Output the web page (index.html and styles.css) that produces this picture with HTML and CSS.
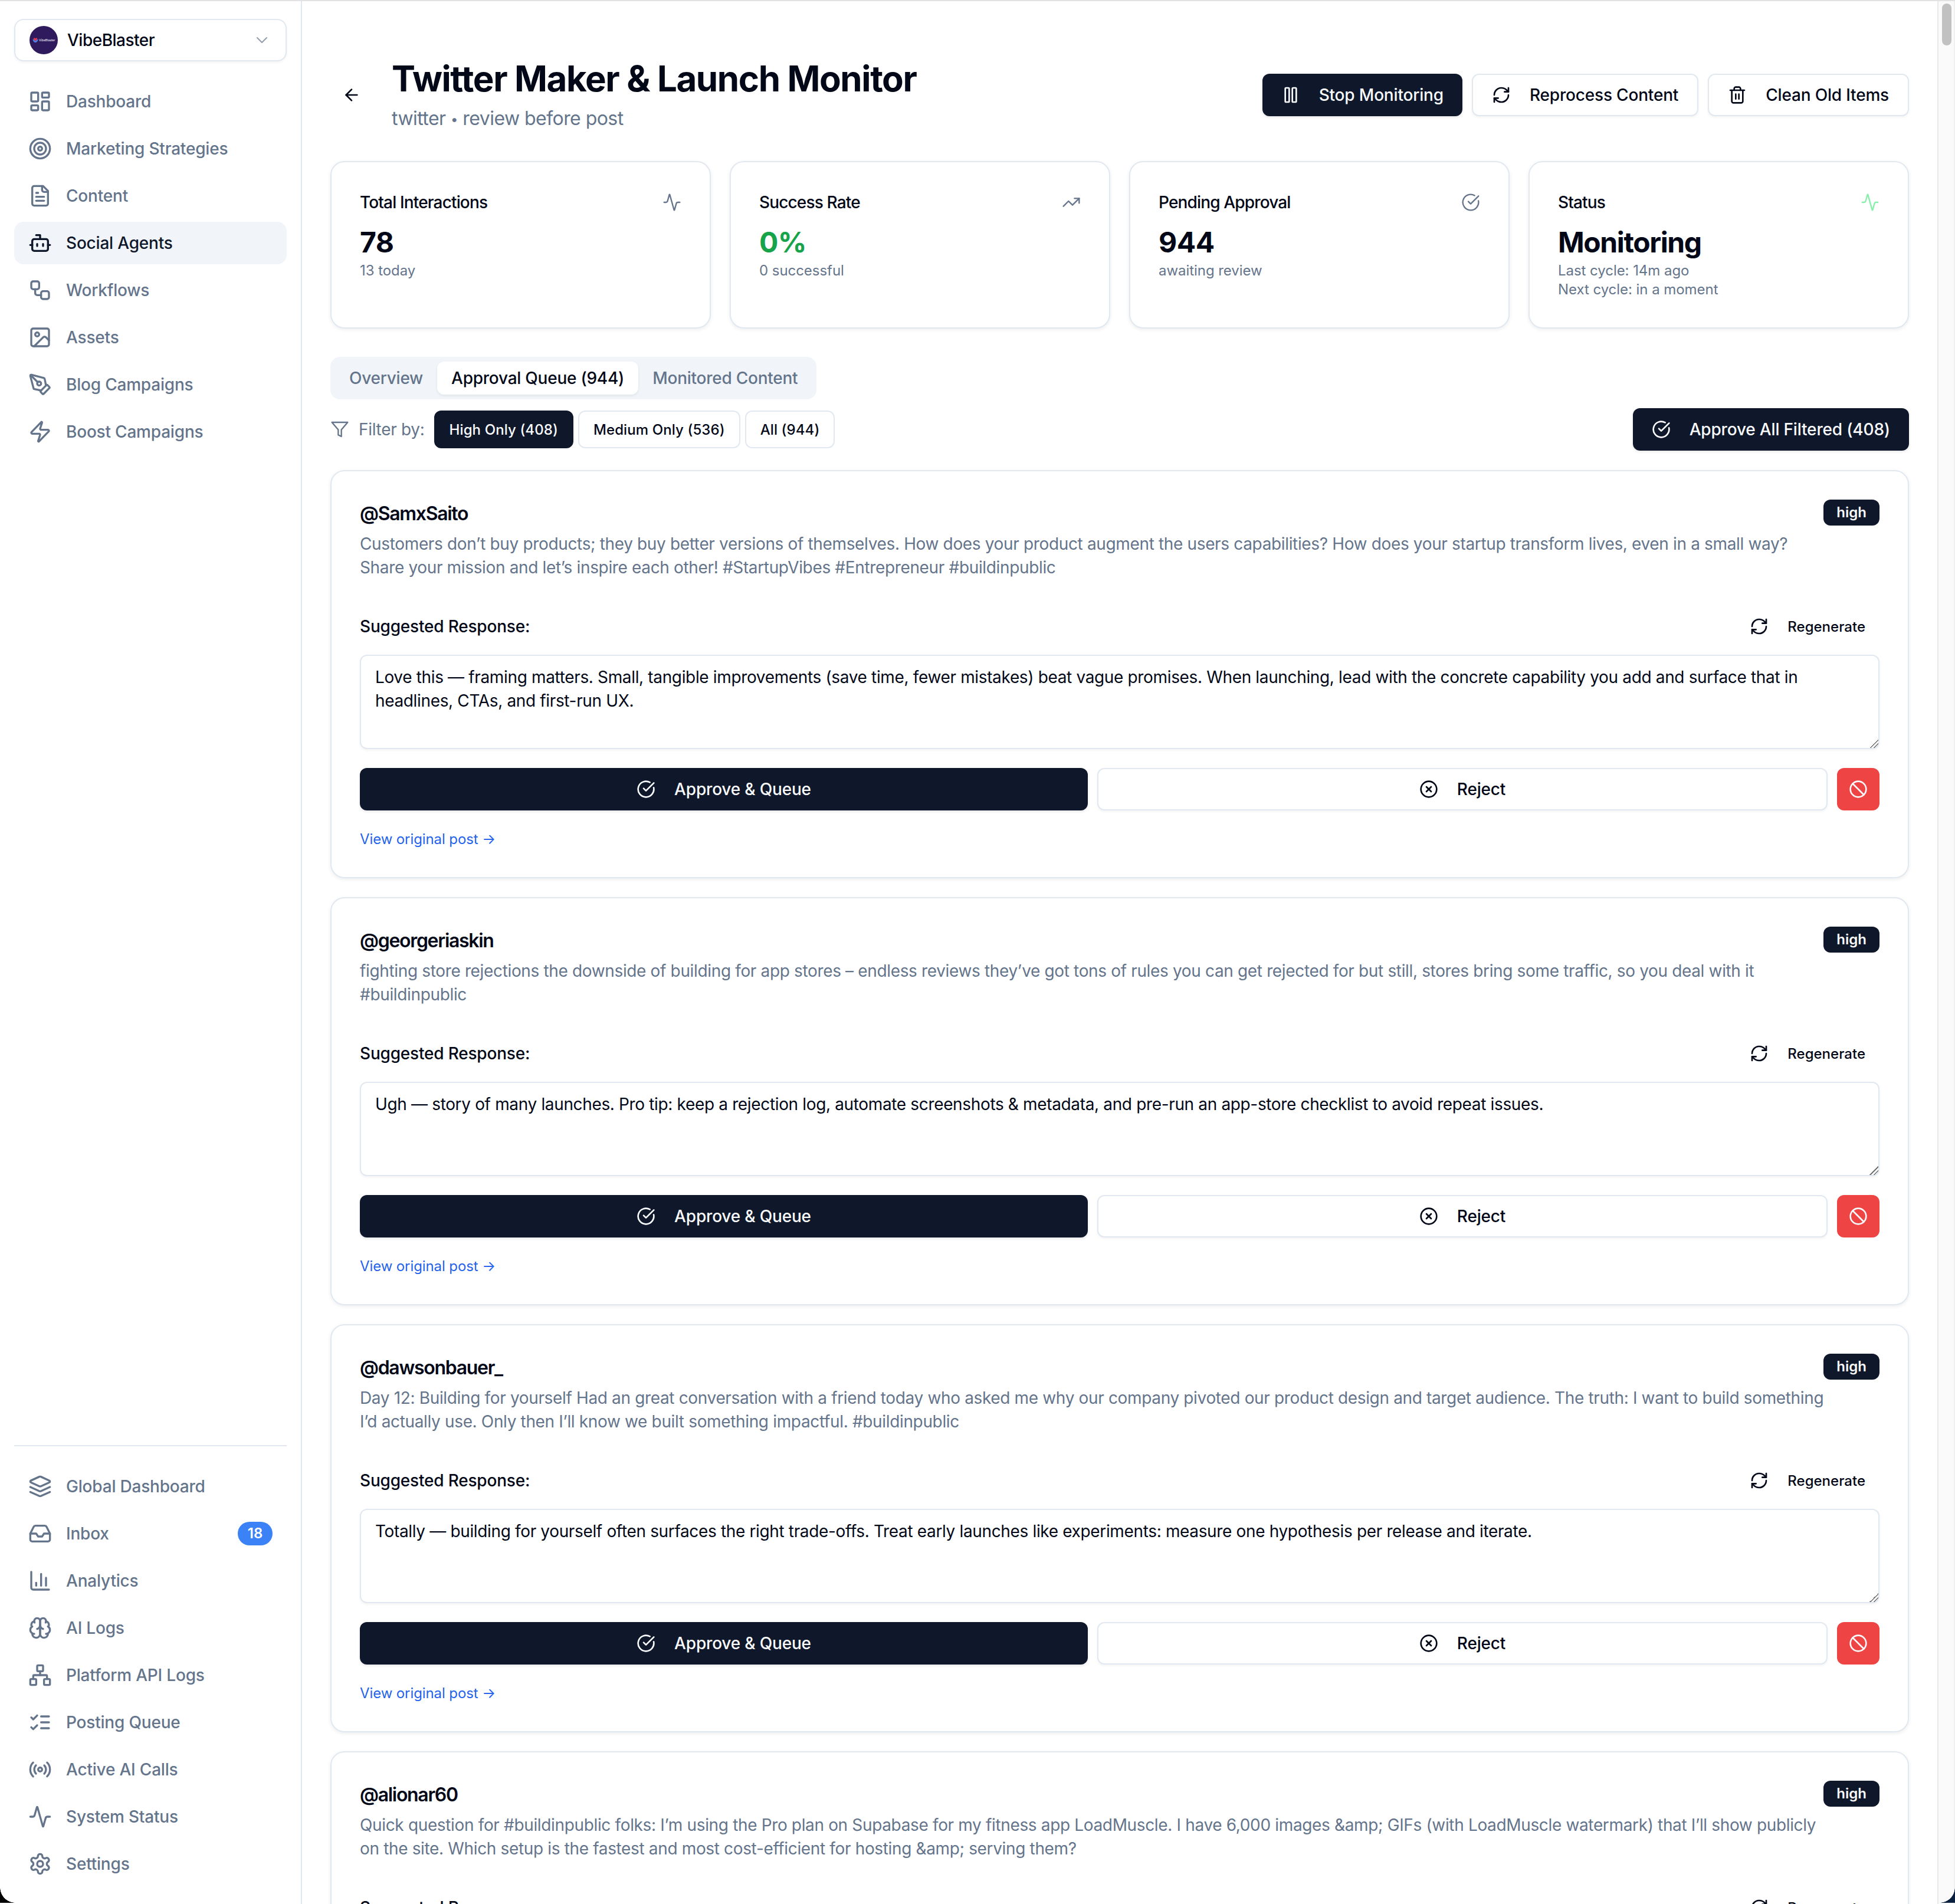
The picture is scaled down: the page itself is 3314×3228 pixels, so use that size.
FILE: index.html
```html
<!DOCTYPE html>
<html lang="en">
<head>
<meta charset="utf-8">
<title>Twitter Maker &amp; Launch Monitor</title>
<link rel="stylesheet" href="styles.css">
</head>
<body>
<svg class="defs" aria-hidden="true">
  <defs>
    <symbol id="i-dashboard" viewBox="0 0 24 24"><rect x="3" y="3" width="7" height="9" rx="1"/><rect x="14" y="3" width="7" height="5" rx="1"/><rect x="14" y="12" width="7" height="9" rx="1"/><rect x="3" y="16" width="7" height="5" rx="1"/></symbol>
    <symbol id="i-target" viewBox="0 0 24 24"><circle cx="12" cy="12" r="10"/><circle cx="12" cy="12" r="6"/><circle cx="12" cy="12" r="2"/></symbol>
    <symbol id="i-file" viewBox="0 0 24 24"><path d="M15 2H6a2 2 0 0 0-2 2v16a2 2 0 0 0 2 2h12a2 2 0 0 0 2-2V7Z"/><path d="M14 2v4a2 2 0 0 0 2 2h4"/><path d="M10 9H8"/><path d="M16 13H8"/><path d="M16 17H8"/></symbol>
    <symbol id="i-bot" viewBox="0 0 24 24"><path d="M12 8V4H8"/><rect x="4" y="8" width="16" height="12" rx="2"/><path d="M2 14h2"/><path d="M20 14h2"/><path d="M15 13v2"/><path d="M9 13v2"/></symbol>
    <symbol id="i-workflow" viewBox="0 0 24 24"><rect x="3" y="3" width="8" height="8" rx="2"/><path d="M7 11v4a2 2 0 0 0 2 2h4"/><rect x="13" y="13" width="8" height="8" rx="2"/></symbol>
    <symbol id="i-image" viewBox="0 0 24 24"><rect x="3" y="3" width="18" height="18" rx="2"/><circle cx="9" cy="9" r="2"/><path d="m21 15-3.086-3.086a2 2 0 0 0-2.828 0L6 21"/></symbol>
    <symbol id="i-pen" viewBox="0 0 24 24"><path d="M15.707 21.293a1 1 0 0 1-1.414 0l-1.586-1.586a1 1 0 0 1 0-1.414l5.586-5.586a1 1 0 0 1 1.414 0l1.586 1.586a1 1 0 0 1 0 1.414z"/><path d="m18 13-1.375-6.874a1 1 0 0 0-.746-.776L3.235 2.028a1 1 0 0 0-1.207 1.207L5.35 15.879a1 1 0 0 0 .776.746L13 18"/><path d="m2.3 2.3 7.286 7.286"/><circle cx="11" cy="11" r="2"/></symbol>
    <symbol id="i-zap" viewBox="0 0 24 24"><path d="M4 14a1 1 0 0 1-.78-1.63l9.9-10.2a.5.5 0 0 1 .86.46l-1.92 6.02A1 1 0 0 0 13 10h7a1 1 0 0 1 .78 1.63l-9.9 10.2a.5.5 0 0 1-.86-.46l1.92-6.02A1 1 0 0 0 11 14z"/></symbol>
    <symbol id="i-layers" viewBox="0 0 24 24"><path d="m12.83 2.18a2 2 0 0 0-1.66 0L2.6 6.08a1 1 0 0 0 0 1.83l8.58 3.91a2 2 0 0 0 1.66 0l8.58-3.9a1 1 0 0 0 0-1.83Z"/><path d="m22 17.65-9.17 4.16a2 2 0 0 1-1.66 0L2 17.65"/><path d="m22 12.65-9.17 4.16a2 2 0 0 1-1.66 0L2 12.65"/></symbol>
    <symbol id="i-inbox" viewBox="0 0 24 24"><polyline points="22 12 16 12 14 15 10 15 8 12 2 12"/><path d="M5.45 5.11 2 12v6a2 2 0 0 0 2 2h16a2 2 0 0 0 2-2v-6l-3.45-6.89A2 2 0 0 0 16.76 4H7.24a2 2 0 0 0-1.79 1.11z"/></symbol>
    <symbol id="i-chart" viewBox="0 0 24 24"><path d="M3 3v16a2 2 0 0 0 2 2h16"/><path d="M18 17V9"/><path d="M13 17V5"/><path d="M8 17v-3"/></symbol>
    <symbol id="i-brain" viewBox="0 0 24 24"><path d="M12 5a3 3 0 1 0-5.997.125 4 4 0 0 0-2.526 5.77 4 4 0 0 0 .556 6.588A4 4 0 1 0 12 18Z"/><path d="M12 5a3 3 0 1 1 5.997.125 4 4 0 0 1 2.526 5.77 4 4 0 0 1-.556 6.588A4 4 0 1 1 12 18Z"/><path d="M15 13a4.5 4.5 0 0 1-3-4 4.5 4.5 0 0 1-3 4"/><path d="M17.599 6.5a3 3 0 0 0 .399-1.375"/><path d="M6.003 5.125A3 3 0 0 0 6.401 6.5"/><path d="M3.477 10.896a4 4 0 0 1 .585-.396"/><path d="M19.938 10.5a4 4 0 0 1 .585.396"/><path d="M6 18a4 4 0 0 1-1.967-.516"/><path d="M19.967 17.484A4 4 0 0 1 18 18"/></symbol>
    <symbol id="i-network" viewBox="0 0 24 24"><rect x="16" y="16" width="6" height="6" rx="1"/><rect x="2" y="16" width="6" height="6" rx="1"/><rect x="9" y="2" width="6" height="6" rx="1"/><path d="M5 16v-3a1 1 0 0 1 1-1h12a1 1 0 0 1 1 1v3"/><path d="M12 12V8"/></symbol>
    <symbol id="i-list" viewBox="0 0 24 24"><path d="m3 17 2 2 4-4"/><path d="m3 7 2 2 4-4"/><path d="M13 6h8"/><path d="M13 12h8"/><path d="M13 18h8"/></symbol>
    <symbol id="i-radio" viewBox="0 0 24 24"><path d="M4.9 19.1C1 15.2 1 8.8 4.9 4.9"/><path d="M7.8 16.2c-2.3-2.3-2.3-6.1 0-8.5"/><circle cx="12" cy="12" r="2"/><path d="M16.2 7.8c2.3 2.3 2.3 6.1 0 8.5"/><path d="M19.1 4.9C23 8.8 23 15.1 19.1 19"/></symbol>
    <symbol id="i-activity" viewBox="0 0 24 24"><path d="M22 12h-2.48a2 2 0 0 0-1.93 1.46l-2.35 8.36a.25.25 0 0 1-.48 0L9.24 2.18a.25.25 0 0 0-.48 0l-2.35 8.36A2 2 0 0 1 4.49 12H2"/></symbol>
    <symbol id="i-settings" viewBox="0 0 24 24"><path d="M12.22 2h-.44a2 2 0 0 0-2 2v.18a2 2 0 0 1-1 1.73l-.43.25a2 2 0 0 1-2 0l-.15-.08a2 2 0 0 0-2.73.73l-.22.38a2 2 0 0 0 .73 2.73l.15.1a2 2 0 0 1 1 1.72v.51a2 2 0 0 1-1 1.74l-.15.09a2 2 0 0 0-.73 2.73l.22.38a2 2 0 0 0 2.73.73l.15-.08a2 2 0 0 1 2 0l.43.25a2 2 0 0 1 1 1.73V20a2 2 0 0 0 2 2h.44a2 2 0 0 0 2-2v-.18a2 2 0 0 1 1-1.73l.43-.25a2 2 0 0 1 2 0l.15.08a2 2 0 0 0 2.73-.73l.22-.39a2 2 0 0 0-.73-2.73l-.15-.08a2 2 0 0 1-1-1.74v-.5a2 2 0 0 1 1-1.74l.15-.09a2 2 0 0 0 .73-2.73l-.22-.38a2 2 0 0 0-2.73-.73l-.15.08a2 2 0 0 1-2 0l-.43-.25a2 2 0 0 1-1-1.73V4a2 2 0 0 0-2-2z"/><circle cx="12" cy="12" r="3"/></symbol>
    <symbol id="i-chevron" viewBox="0 0 24 24"><path d="m6 9 6 6 6-6"/></symbol>
    <symbol id="i-back" viewBox="0 0 24 24"><path d="m12 19-7-7 7-7"/><path d="M19 12H5"/></symbol>
    <symbol id="i-pause" viewBox="0 0 24 24"><rect x="14" y="3" width="5" height="18" rx="1"/><rect x="5" y="3" width="5" height="18" rx="1"/></symbol>
    <symbol id="i-refresh" viewBox="0 0 24 24"><path d="M3 12a9 9 0 0 1 9-9 9.75 9.75 0 0 1 6.74 2.74L21 8"/><path d="M21 3v5h-5"/><path d="M21 12a9 9 0 0 1-9 9 9.75 9.75 0 0 1-6.74-2.74L3 16"/><path d="M8 16H3v5"/></symbol>
    <symbol id="i-trash" viewBox="0 0 24 24"><path d="M3 6h18"/><path d="M19 6v14c0 1-1 2-2 2H7c-1 0-2-1-2-2V6"/><path d="M8 6V4c0-1 1-2 2-2h4c1 0 2 1 2 2v2"/><path d="M10 11v6"/><path d="M14 11v6"/></symbol>
    <symbol id="i-trend" viewBox="0 0 24 24"><polyline points="22 7 13.5 15.5 8.5 10.5 2 17"/><polyline points="16 7 22 7 22 13"/></symbol>
    <symbol id="i-check" viewBox="0 0 24 24"><path d="M21.801 10A10 10 0 1 1 17 3.335"/><path d="m9 11 3 3L22 4"/></symbol>
    <symbol id="i-filter" viewBox="0 0 24 24"><polygon points="22 3 2 3 10 12.46 10 19 14 21 14 12.46 22 3"/></symbol>
    <symbol id="i-x" viewBox="0 0 24 24"><circle cx="12" cy="12" r="10"/><path d="m15 9-6 6"/><path d="m9 9 6 6"/></symbol>
    <symbol id="i-ban" viewBox="0 0 24 24"><circle cx="12" cy="12" r="10"/><path d="m4.9 4.9 14.2 14.2"/></symbol>
  </defs>
</svg>

<div class="app">
  <aside class="sidebar">
    <button class="switcher">
      <span class="avatar">
        <svg class="avatar-mark" viewBox="0 0 20 20"><path class="mark-blue" d="M1 7c0 7 5 11 9 11s9-4 9-11l-4 1-5 5-5-5z"/><path class="mark-red" d="M10 13 4 6.500C3 4 5 2 7 2.500l3 2 3-2c2-.5 4 1.500 3 4z"/></svg>
        <span class="avatar-name">VibeBlaster</span>
      </span>
      <span class="switcher-name">VibeBlaster</span>
      <svg class="ico ico-32 switcher-chevron"><use href="#i-chevron"/></svg>
    </button>

    <nav class="nav">
      <a class="nav-item"><svg class="ico ico-40"><use href="#i-dashboard"/></svg>Dashboard</a>
      <a class="nav-item"><svg class="ico ico-40"><use href="#i-target"/></svg>Marketing Strategies</a>
      <a class="nav-item"><svg class="ico ico-40"><use href="#i-file"/></svg>Content</a>
      <a class="nav-item is-active"><svg class="ico ico-40"><use href="#i-bot"/></svg>Social Agents</a>
      <a class="nav-item"><svg class="ico ico-40"><use href="#i-workflow"/></svg>Workflows</a>
      <a class="nav-item"><svg class="ico ico-40"><use href="#i-image"/></svg>Assets</a>
      <a class="nav-item"><svg class="ico ico-40"><use href="#i-pen"/></svg>Blog Campaigns</a>
      <a class="nav-item"><svg class="ico ico-40"><use href="#i-zap"/></svg>Boost Campaigns</a>
    </nav>

    <nav class="nav nav-bottom">
      <a class="nav-item"><svg class="ico ico-40"><use href="#i-layers"/></svg>Global Dashboard</a>
      <a class="nav-item"><svg class="ico ico-40"><use href="#i-inbox"/></svg>Inbox<span class="count">18</span></a>
      <a class="nav-item"><svg class="ico ico-40"><use href="#i-chart"/></svg>Analytics</a>
      <a class="nav-item"><svg class="ico ico-40"><use href="#i-brain"/></svg>AI Logs</a>
      <a class="nav-item"><svg class="ico ico-40"><use href="#i-network"/></svg>Platform API Logs</a>
      <a class="nav-item"><svg class="ico ico-40"><use href="#i-list"/></svg>Posting Queue</a>
      <a class="nav-item"><svg class="ico ico-40"><use href="#i-radio"/></svg>Active AI Calls</a>
      <a class="nav-item"><svg class="ico ico-40"><use href="#i-activity"/></svg>System Status</a>
      <a class="nav-item"><svg class="ico ico-40"><use href="#i-settings"/></svg>Settings</a>
    </nav>
  </aside>

  <main class="main">
    <header class="page-head">
      <button class="back"><svg class="ico ico-32"><use href="#i-back"/></svg></button>
      <div class="page-titles">
        <h1 class="page-title">Twitter Maker &amp; Launch Monitor</h1>
        <p class="page-sub">twitter <span class="page-dot">•</span> review before post</p>
      </div>
      <div class="page-actions">
        <button class="btn btn-dark"><svg class="ico ico-32"><use href="#i-pause"/></svg>Stop Monitoring</button>
        <button class="btn btn-line"><svg class="ico ico-32"><use href="#i-refresh"/></svg>Reprocess Content</button>
        <button class="btn btn-line"><svg class="ico ico-32"><use href="#i-trash"/></svg>Clean Old Items</button>
      </div>
    </header>

    <section class="stats">
      <div class="stat">
        <div class="stat-top"><span>Total Interactions</span><svg class="ico ico-32 ico-thin stat-icon"><use href="#i-activity"/></svg></div>
        <div class="stat-value">78</div>
        <div class="stat-note">13 today</div>
      </div>
      <div class="stat">
        <div class="stat-top"><span>Success Rate</span><svg class="ico ico-32 ico-thin stat-icon"><use href="#i-trend"/></svg></div>
        <div class="stat-value stat-good">0%</div>
        <div class="stat-note">0 successful</div>
      </div>
      <div class="stat">
        <div class="stat-top"><span>Pending Approval</span><svg class="ico ico-32 ico-thin stat-icon"><use href="#i-check"/></svg></div>
        <div class="stat-value">944</div>
        <div class="stat-note">awaiting review</div>
      </div>
      <div class="stat">
        <div class="stat-top"><span>Status</span><svg class="ico ico-32 ico-thin stat-icon stat-icon-live"><use href="#i-activity"/></svg></div>
        <div class="stat-value stat-word">Monitoring</div>
        <div class="stat-note">Last cycle: 14m ago</div>
        <div class="stat-note">Next cycle: in a moment</div>
      </div>
    </section>

    <div class="tabs">
      <button class="tab">Overview</button>
      <button class="tab is-active">Approval Queue (944)</button>
      <button class="tab">Monitored Content</button>
    </div>

    <div class="filters">
      <svg class="ico ico-32 ico-thin filter-icon"><use href="#i-filter"/></svg>
      <span class="filter-label">Filter by:</span>
      <button class="pill pill-on">High Only (408)</button>
      <button class="pill">Medium Only (536)</button>
      <button class="pill">All (944)</button>
      <button class="btn btn-dark filters-approve"><svg class="ico ico-32"><use href="#i-check"/></svg>Approve All Filtered (408)</button>
    </div>

    <section class="posts">
      <article class="post">
        <div class="post-head">
          <div class="post-main">
            <div class="handle">@SamxSaito</div>
            <p class="post-text">Customers don’t buy products; they buy better versions of themselves. How does your product augment the users capabilities? How does your startup transform lives, even in a small way? Share your mission and let’s inspire each other! #StartupVibes #Entrepreneur #buildinpublic</p>
          </div>
          <span class="badge">high</span>
        </div>
        <div class="reply-head"><span class="reply-label">Suggested Response:</span><button class="regen"><svg class="ico ico-32"><use href="#i-refresh"/></svg>Regenerate</button></div>
        <textarea class="reply" readonly>Love this — framing matters. Small, tangible improvements (save time, fewer mistakes) beat vague promises. When launching, lead with the concrete capability you add and surface that in headlines, CTAs, and first-run UX.</textarea>
        <div class="post-actions">
          <button class="btn btn-dark btn-grow"><svg class="ico ico-32"><use href="#i-check"/></svg>Approve &amp; Queue</button>
          <button class="btn btn-line btn-grow"><svg class="ico ico-32"><use href="#i-x"/></svg>Reject</button>
          <button class="btn-block"><svg class="ico ico-32"><use href="#i-ban"/></svg></button>
        </div>
        <a class="post-link">View original post →</a>
      </article>

      <article class="post">
        <div class="post-head">
          <div class="post-main">
            <div class="handle">@georgeriaskin</div>
            <p class="post-text">fighting store rejections the downside of building for app stores – endless reviews they’ve got tons of rules you can get rejected for but still, stores bring some traffic, so you deal with it #buildinpublic</p>
          </div>
          <span class="badge">high</span>
        </div>
        <div class="reply-head"><span class="reply-label">Suggested Response:</span><button class="regen"><svg class="ico ico-32"><use href="#i-refresh"/></svg>Regenerate</button></div>
        <textarea class="reply" readonly>Ugh — story of many launches. Pro tip: keep a rejection log, automate screenshots &amp; metadata, and pre-run an app-store checklist to avoid repeat issues.</textarea>
        <div class="post-actions">
          <button class="btn btn-dark btn-grow"><svg class="ico ico-32"><use href="#i-check"/></svg>Approve &amp; Queue</button>
          <button class="btn btn-line btn-grow"><svg class="ico ico-32"><use href="#i-x"/></svg>Reject</button>
          <button class="btn-block"><svg class="ico ico-32"><use href="#i-ban"/></svg></button>
        </div>
        <a class="post-link">View original post →</a>
      </article>

      <article class="post">
        <div class="post-head">
          <div class="post-main">
            <div class="handle">@dawsonbauer_</div>
            <p class="post-text">Day 12: Building for yourself Had an great conversation with a friend today who asked me why our company pivoted our product design and target audience. The truth: I want to build something I’d actually use. Only then I’ll know we built something impactful. #buildinpublic</p>
          </div>
          <span class="badge">high</span>
        </div>
        <div class="reply-head"><span class="reply-label">Suggested Response:</span><button class="regen"><svg class="ico ico-32"><use href="#i-refresh"/></svg>Regenerate</button></div>
        <textarea class="reply" readonly>Totally — building for yourself often surfaces the right trade-offs. Treat early launches like experiments: measure one hypothesis per release and iterate.</textarea>
        <div class="post-actions">
          <button class="btn btn-dark btn-grow"><svg class="ico ico-32"><use href="#i-check"/></svg>Approve &amp; Queue</button>
          <button class="btn btn-line btn-grow"><svg class="ico ico-32"><use href="#i-x"/></svg>Reject</button>
          <button class="btn-block"><svg class="ico ico-32"><use href="#i-ban"/></svg></button>
        </div>
        <a class="post-link">View original post →</a>
      </article>

      <article class="post">
        <div class="post-head">
          <div class="post-main">
            <div class="handle">@alionar60</div>
            <p class="post-text">Quick question for #buildinpublic folks: I’m using the Pro plan on Supabase for my fitness app LoadMuscle. I have 6,000 images &amp;amp; GIFs (with LoadMuscle watermark) that I’ll show publicly on the site. Which setup is the fastest and most cost-efficient for hosting &amp;amp; serving them?</p>
          </div>
          <span class="badge">high</span>
        </div>
        <div class="reply-head"><span class="reply-label">Suggested Response:</span><button class="regen"><svg class="ico ico-32"><use href="#i-refresh"/></svg>Regenerate</button></div>
      </article>
    </section>
  </main>

  <div class="gutter"><div class="thumb"></div></div>
  <div class="corner corner-left"></div>
  <div class="corner corner-right"></div>
</div>
</body>
</html>
```

FILE: styles.css
```css
* { box-sizing: border-box; }

html, body {
  margin: 0;
  height: 3228px;
  overflow: hidden;
  background: #fff;
}

body {
  font-family: Inter, "Liberation Sans", sans-serif;
  font-size: 28px;
  color: #020817;
}

button, textarea { font-family: inherit; }
button { cursor: pointer; }

.defs { position: absolute; width: 0; height: 0; }

.ico {
  flex: none;
  fill: none;
  stroke: currentColor;
  stroke-width: 2;
  stroke-linecap: round;
  stroke-linejoin: round;
}
.ico-thin { stroke-width: 1.75; }
.ico-32 { width: 32px; height: 32px; }
.ico-40 { width: 40px; height: 40px; }

.app {
  position: relative;
  display: flex;
  height: 3228px;
  border-top: 2px solid #e2e2e4;
  overflow: hidden;
}

/* Sidebar */
.sidebar {
  flex: none;
  width: 512px;
  display: flex;
  flex-direction: column;
  padding: 30px 24px 32px;
  border-right: 2px solid #e2e8f0;
}

.switcher {
  display: flex;
  align-items: center;
  gap: 16px;
  width: 100%;
  height: 72px;
  padding: 0 24px;
  background: #fff;
  border: 2px solid #e2e8f0;
  border-radius: 16px;
  box-shadow: 0 2px 4px rgba(15, 23, 42, .05);
  color: #020817;
  font-size: 28px;
  font-weight: 500;
  letter-spacing: -.5px;
}
.switcher-name { flex: 1; text-align: left; }
.switcher-chevron { color: #64748b; opacity: .7; stroke-width: 1.5; }

.avatar {
  flex: none;
  display: flex;
  align-items: center;
  gap: 1px;
  width: 48px;
  height: 48px;
  padding-left: 5px;
  border-radius: 50%;
  background: #2e1a5c;
  overflow: hidden;
}
.avatar-mark { flex: none; width: 10px; height: 10px; }
.avatar-name { color: #e6e2f2; font-size: 5px; font-weight: 500; letter-spacing: 0; line-height: 1; white-space: nowrap; }
.mark-blue { fill: #4f7fe0; }
.mark-red { fill: #e8384f; }

.nav { display: flex; flex-direction: column; gap: 8px; }
.sidebar > .nav:first-of-type { margin-top: 32px; }

.nav-bottom {
  margin-top: auto;
  padding-top: 32px;
  border-top: 2px solid #e2e8f0;
}

.nav-item {
  display: flex;
  align-items: center;
  gap: 24px;
  height: 72px;
  padding: 0 24px;
  border-radius: 16px;
  color: #64748b;
  font-weight: 500;
  letter-spacing: -.2px;
  white-space: nowrap;
}
.nav-item.is-active { background: #f1f5f9; color: #0f172a; }

.count {
  margin-left: auto;
  min-width: 59px;
  height: 40px;
  padding: 0 16px;
  border-radius: 20px;
  background: #3b82f6;
  color: #fff;
  font-size: 24px;
  font-weight: 600;
  letter-spacing: 0;
  line-height: 40px;
  text-align: center;
}

/* Main */
.main {
  flex: 1;
  min-width: 0;
  padding: 95px 48px 0;
  overflow: hidden;
}

.page-head { display: flex; align-items: center; margin-bottom: 48px; }

.back {
  flex: none;
  display: flex;
  align-items: center;
  justify-content: center;
  width: 72px;
  height: 72px;
  margin-right: 32px;
  padding: 0;
  border: 0;
  background: none;
  color: #020817;
}

.page-titles { flex: 1; min-width: 0; }

.page-title {
  margin: 0 0 8px;
  font-size: 60px;
  font-weight: 700;
  line-height: 72px;
  letter-spacing: -1.4px;
}

.page-sub {
  margin: 0;
  color: #64748b;
  font-size: 32px;
  line-height: 48px;
  letter-spacing: -.55px;
}
.page-dot { font-size: 22px; line-height: 0; position: relative; top: -2px; }

.page-actions { flex: none; display: flex; gap: 16px; }

.btn {
  display: inline-flex;
  align-items: center;
  justify-content: center;
  gap: 32px;
  height: 72px;
  padding: 0 32px;
  border-radius: 12px;
  font-size: 28px;
  font-weight: 500;
  letter-spacing: -.18px;
  white-space: nowrap;
}
.btn-dark {
  border: 0;
  background: #0f172a;
  color: #f8fafc;
  box-shadow: 0 2px 4px rgba(15, 23, 42, .1);
}
.btn-line {
  border: 2px solid #e2e8f0;
  background: #fff;
  color: #020817;
  box-shadow: 0 2px 4px rgba(15, 23, 42, .05);
}
.btn-grow { flex: 1 1 0; }

/* Stats */
.stats {
  display: grid;
  grid-template-columns: repeat(4, 1fr);
  gap: 32px;
  margin-bottom: 48px;
}

.stat {
  padding: 48px;
  background: #fff;
  border: 2px solid #e2e8f0;
  border-radius: 24px;
  box-shadow: 0 2px 6px rgba(15, 23, 42, .08);
}

.stat-top {
  display: flex;
  align-items: center;
  justify-content: space-between;
  height: 40px;
  margin-bottom: 16px;
  font-size: 28px;
  font-weight: 500;
  letter-spacing: -.85px;
}

.stat-icon { color: #64748b; }
.stat-icon-live { color: #86efac; }

.stat-value {
  font-size: 48px;
  font-weight: 700;
  line-height: 64px;
  letter-spacing: -.5px;
  color: #020817;
}
.stat-good { color: #16a34a; }
.stat-word { letter-spacing: -1.4px; }

.stat-note {
  color: #64748b;
  font-size: 24px;
  line-height: 32px;
  letter-spacing: -.05px;
}

/* Tabs */
.tabs {
  display: inline-flex;
  padding: 8px;
  background: #f1f5f9;
  border-radius: 16px;
  vertical-align: top;
}

.tab {
  height: 56px;
  padding: 0 24px;
  border: 0;
  border-radius: 12px;
  background: none;
  color: #64748b;
  font-size: 28px;
  font-weight: 500;
  letter-spacing: -.25px;
  white-space: nowrap;
}
.tab.is-active {
  background: #fff;
  color: #020817;
  box-shadow: 0 2px 4px rgba(15, 23, 42, .08);
}

/* Filters */
.filters {
  display: flex;
  align-items: center;
  margin: 15px 0 33px;
}

.filter-icon { color: #64748b; margin-right: 16px; }
.filter-label { margin-right: 16px; color: #64748b; font-size: 28px; letter-spacing: -.3px; }

.pill {
  height: 64px;
  margin-right: 8px;
  padding: 0 24px;
  background: #fff;
  border: 2px solid #e2e8f0;
  border-radius: 12px;
  color: #020817;
  font-size: 24px;
  font-weight: 500;
  letter-spacing: .1px;
  white-space: nowrap;
}
.pill-on { border-color: #0f172a; background: #0f172a; color: #f8fafc; }

.filters-approve { margin-left: auto; }

/* Posts */
.posts { display: flex; flex-direction: column; gap: 32px; }

.post {
  flex: none;
  padding: 48px;
  background: #fff;
  border: 2px solid #e2e8f0;
  border-radius: 24px;
  box-shadow: 0 2px 6px rgba(15, 23, 42, .08);
}

.post-head {
  display: flex;
  align-items: flex-start;
  margin-bottom: 48px;
}

.post-main { flex: 1; min-width: 0; }

.handle { margin-bottom: 7px; font-size: 32px; font-weight: 600; line-height: 48px; letter-spacing: -1.3px; }

.badge {
  flex: none;
  height: 44px;
  margin-left: -8px;
  padding: 0 22px;
  border-radius: 12px;
  background: #0f172a;
  color: #f8fafc;
  font-size: 24px;
  font-weight: 600;
  line-height: 44px;
}

.post-text {
  margin: 0;
  min-height: 80px;
  color: #64748b;
  font-size: 28px;
  line-height: 40px;
  letter-spacing: -.35px;
}

.reply-head {
  display: flex;
  align-items: center;
  justify-content: space-between;
  height: 64px;
  margin-bottom: 16px;
}

.reply-label { font-size: 28px; font-weight: 500; letter-spacing: -.2px; }

.regen {
  display: inline-flex;
  align-items: center;
  gap: 32px;
  height: 64px;
  padding: 0 24px;
  border: 0;
  background: none;
  color: #020817;
  font-size: 24px;
  font-weight: 500;
}

.reply {
  display: block;
  width: 100%;
  height: 160px;
  margin-bottom: 32px;
  padding: 16px 24px;
  background: #fff;
  border: 2px solid #e2e8f0;
  border-radius: 12px;
  box-shadow: 0 2px 4px rgba(15, 23, 42, .05);
  color: #020817;
  font-size: 28px;
  line-height: 40px;
  letter-spacing: -.35px;
  outline: none;
}
.reply::-webkit-resizer {
  background: linear-gradient(135deg, transparent 50%, #777 50%, #777 57%, transparent 57%, transparent 72%, #777 72%, #777 79%, transparent 79%);
}

.post-actions { display: flex; gap: 16px; margin-bottom: 33px; }

.btn-block {
  flex: none;
  display: flex;
  align-items: center;
  justify-content: center;
  width: 72px;
  height: 72px;
  padding: 0;
  border: 0;
  border-radius: 12px;
  background: #ef4444;
  color: #f8fafc;
}

.post-link {
  display: block;
  color: #2563eb;
  font-size: 24px;
  line-height: 32px;
  letter-spacing: -.1px;
}

/* Browser chrome */
.gutter {
  flex: none;
  width: 30px;
  padding: 4px 6px 0 6px;
  background: #fafafa;
  border-left: 2px solid #e8e8e8;
  border-right: 2px solid #f0f0f0;
}
.thumb { width: 16px; height: 71px; border-radius: 8px; background: #c1c1c1; }

.corner {
  position: absolute;
  bottom: 2px;
  width: 26px;
  height: 26px;
}
.corner-left { left: 0; background: radial-gradient(circle at 100% 0, transparent 25.5px, #000 26px); }
.corner-right { right: 0; background: radial-gradient(circle at 0 0, transparent 25.5px, #0b1f3f 26px); }
```
